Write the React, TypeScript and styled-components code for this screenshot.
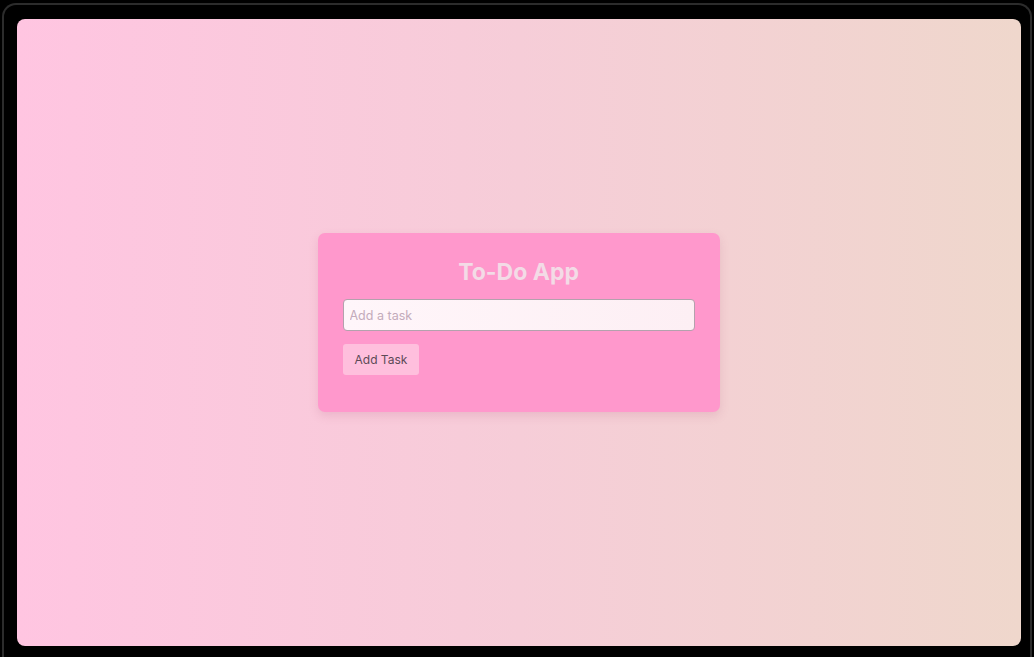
import React, { useState } from "react";
import styled, { createGlobalStyle } from "styled-components";

const Global = createGlobalStyle`
  html, body { margin: 0; padding: 0; background: #000; overflow: hidden; }
  body { font-family: Inter, "Noto Sans", sans-serif; }
  * { box-sizing: border-box; }
`;

const Frame = styled.div`
  margin: 3px 0 0 2px;
  width: 1030px;
  height: 654px;
  border: 2px solid #2c2c2c;
  border-bottom: none;
  border-radius: 14px 14px 0 0;
  padding: 14px 9px 0 13px;
  background: #000;
`;

const Panel = styled.main`
  width: 1004px;
  height: 627px;
  border-radius: 8px;
  background: linear-gradient(90deg, #ffc5e1 0%, #f6cdd8 50%, #efd7cc 100%);
  display: flex;
  align-items: center;
  justify-content: center;
`;

const Card = styled.section`
  width: 402px;
  margin: 0 1px 20px 0;
  padding: 25px 25px 37px;
  border-radius: 7px;
  background: #ff98cc;
  box-shadow: 0 4px 10px rgba(180, 90, 130, 0.18);
  display: flex;
  flex-direction: column;
  align-items: flex-start;
`;

const Title = styled.h1`
  align-self: stretch;
  margin: 0 0 13px;
  text-align: center;
  font-size: 23px;
  line-height: 28px;
  font-weight: 700;
  color: #f3dbe6;
`;

const Input = styled.input`
  width: 352px;
  height: 32px;
  padding: 0 6px;
  border: 1px solid #b4a1ad;
  border-radius: 4px;
  background: linear-gradient(90deg, #fff6fa, #fdeff4);
  font-family: Inter, "Noto Sans", sans-serif;
  font-size: 12.5px;
  color: #5a4a55;
  outline: none;
  &::placeholder { color: #c3abbb; }
`;

const Button = styled.button`
  margin-top: 13px;
  height: 31px;
  padding: 0 12px;
  border: none;
  border-radius: 3px;
  background: #ffbfdd;
  font-family: Inter, "Noto Sans", sans-serif;
  font-size: 12px;
  color: #5c4a56;
  cursor: pointer;
`;

const List = styled.ul`
  margin: 0;
  padding: 0;
  list-style: none;
`;

export default function App() {
  const [text, setText] = useState("");
  const [tasks, setTasks] = useState<string[]>([]);
  const add = () => {
    if (text.trim()) {
      setTasks([...tasks, text.trim()]);
      setText("");
    }
  };
  return (
    <>
      <Global />
      <Frame>
        <Panel>
          <Card>
            <Title>To-Do App</Title>
            <Input
              placeholder="Add a task"
              value={text}
              onChange={(e) => setText(e.target.value)}
            />
            <Button onClick={add}>Add Task</Button>
            <List>
              {tasks.map((t, i) => (
                <li key={i}>{t}</li>
              ))}
            </List>
          </Card>
        </Panel>
      </Frame>
    </>
  );
}
